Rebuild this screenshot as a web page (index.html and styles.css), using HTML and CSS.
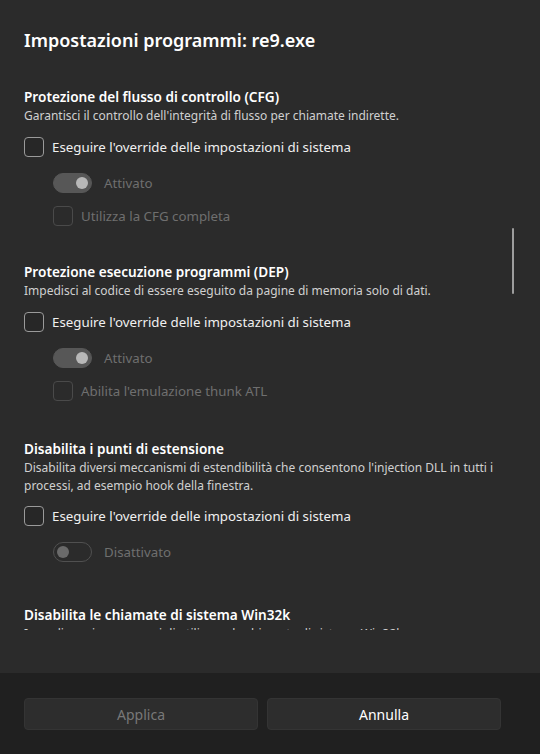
FILE: index.html
```html
<!DOCTYPE html>
<html lang="it">
<head>
    <meta charset="UTF-8">
    <meta name="viewport" content="width=device-width, initial-scale=1.0">
    <title>Impostazioni programmi: re9.exe</title>
    <link rel="stylesheet" href="styles.css">
</head>
<body>
    <div class="dialog">
        <header class="dialog-header">
            <h1>Impostazioni programmi: re9.exe</h1>
        </header>

        <main class="scroll-area">
            <section class="setting">
                <h2>Protezione del flusso di controllo (CFG)</h2>
                <p class="desc">Garantisci il controllo dell'integrità di flusso per chiamate indirette.</p>
                <label class="check-row">
                    <span class="checkbox"></span>
                    <span>Eseguire l'override delle impostazioni di sistema</span>
                </label>
                <div class="sub">
                    <div class="toggle-row">
                        <span class="toggle on"><span class="knob"></span></span>
                        <span>Attivato</span>
                    </div>
                    <label class="check-row disabled">
                        <span class="checkbox"></span>
                        <span>Utilizza la CFG completa</span>
                    </label>
                </div>
            </section>

            <section class="setting">
                <h2>Protezione esecuzione programmi (DEP)</h2>
                <p class="desc">Impedisci al codice di essere eseguito da pagine di memoria solo di dati.</p>
                <label class="check-row">
                    <span class="checkbox"></span>
                    <span>Eseguire l'override delle impostazioni di sistema</span>
                </label>
                <div class="sub">
                    <div class="toggle-row">
                        <span class="toggle on"><span class="knob"></span></span>
                        <span>Attivato</span>
                    </div>
                    <label class="check-row disabled">
                        <span class="checkbox"></span>
                        <span>Abilita l'emulazione thunk ATL</span>
                    </label>
                </div>
            </section>

            <section class="setting">
                <h2>Disabilita i punti di estensione</h2>
                <p class="desc">Disabilita diversi meccanismi di estendibilità che consentono l'injection DLL in tutti i processi, ad esempio hook della finestra.</p>
                <label class="check-row">
                    <span class="checkbox"></span>
                    <span>Eseguire l'override delle impostazioni di sistema</span>
                </label>
                <div class="sub sub-last">
                    <div class="toggle-row">
                        <span class="toggle"><span class="knob"></span></span>
                        <span>Disattivato</span>
                    </div>
                </div>
            </section>

            <section class="setting">
                <h2>Disabilita le chiamate di sistema Win32k</h2>
                <p class="desc">Impedisce ai programmi di utilizzare le chiamate di sistema Win32k.</p>
            </section>

            <div class="scrollbar"></div>
        </main>

        <footer class="dialog-footer">
            <button class="btn" disabled>Applica</button>
            <button class="btn">Annulla</button>
        </footer>
    </div>
</body>
</html>
```

FILE: styles.css
```css
* {
    margin: 0;
    padding: 0;
    box-sizing: border-box;
}

body {
    font-family: "Noto Sans", "Open Sans", sans-serif;
    background-color: #202020;
    color: #ffffff;
}

.dialog {
    height: 100vh;
    display: flex;
    flex-direction: column;
    background-color: #2b2b2b;
}

.dialog-header {
    height: 72px;
    padding: 26px 24px 0;
}

.dialog-header h1 {
    font-size: 18px;
    font-weight: 600;
    line-height: 28px;
}

.scroll-area {
    position: relative;
    height: 558px;
    overflow: hidden;
    padding: 15px 35px 0 24px;
}

.setting + .setting {
    margin-top: 36px;
}

.setting:nth-child(3) {
    margin-top: 38px;
}

.setting h2 {
    font-size: 13.6px;
    font-weight: 600;
    line-height: 20px;
}

.desc {
    font-size: 12px;
    line-height: 18px;
    color: #d0d0d0;
}

.check-row,
.toggle-row {
    display: flex;
    align-items: center;
    gap: 8px;
    height: 20px;
    font-size: 13.3px;
    color: #f0f0f0;
}

.setting > .check-row {
    margin-top: 12px;
}

.setting:nth-child(3) > .check-row {
    margin-top: 11px;
}

.checkbox {
    flex: none;
    width: 20px;
    height: 20px;
    border: 1px solid #9a9a9a;
    border-radius: 4px;
    background-color: #272727;
}

.sub {
    padding-left: 29px;
}

.sub .toggle-row {
    margin-top: 16px;
    gap: 12px;
}

.sub .check-row {
    margin-top: 13px;
}

.sub-last {
    padding-bottom: 7px;
}

.check-row.disabled,
.toggle-row {
    color: #6f6f6f;
}

.check-row.disabled .checkbox {
    border-color: #4a4a4a;
    background-color: #2b2b2b;
}

.toggle {
    position: relative;
    flex: none;
    width: 39px;
    height: 20px;
    border-radius: 10px;
    border: 1px solid #505050;
}

.toggle.on {
    background-color: #575757;
    border-color: #575757;
}

.toggle .knob {
    position: absolute;
    top: 3px;
    left: 3px;
    width: 12px;
    height: 12px;
    border-radius: 50%;
    background-color: #6a6a6a;
}

.toggle.on .knob {
    left: auto;
    right: 3px;
    background-color: #b8b8b8;
}

.scrollbar {
    position: absolute;
    top: 156px;
    right: 26px;
    width: 2px;
    height: 66px;
    border-radius: 1px;
    background-color: #9d9d9d;
}

.dialog-footer {
    margin-top: auto;
    height: 81px;
    display: flex;
    gap: 9px;
    padding: 25px 39px 24px 24px;
    background-color: #202020;
}

.btn {
    flex: 1;
    height: 32px;
    font-family: inherit;
    font-size: 14px;
    color: #ffffff;
    background-color: #2d2d2d;
    border: 1px solid #343434;
    border-radius: 4px;
}

.btn:disabled {
    color: #787878;
}
```
